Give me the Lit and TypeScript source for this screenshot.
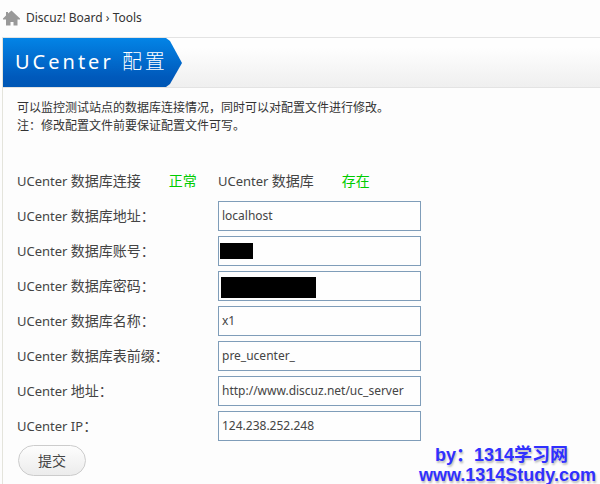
import { LitElement, html, css, nothing } from "lit";
import { customElement } from "lit/decorators.js";

interface Field {
  id: string;
  label: string;
  value: string;
  mask?: "short" | "long";
}

const FIELDS: Field[] = [
  { id: "host", label: "UCenter 数据库地址：", value: "localhost" },
  { id: "user", label: "UCenter 数据库账号：", value: "", mask: "short" },
  { id: "password", label: "UCenter 数据库密码：", value: "", mask: "long" },
  { id: "name", label: "UCenter 数据库名称：", value: "x1" },
  { id: "prefix", label: "UCenter 数据库表前缀：", value: "pre_ucenter_" },
  { id: "url", label: "UCenter 地址：", value: "http://www.discuz.net/uc_server" },
  { id: "ip", label: "UCenter IP：", value: "124.238.252.248" },
];

@customElement("app-root")
export class AppRoot extends LitElement {
  static styles = css`
    :host {
      display: flex;
      flex-direction: column;
      box-sizing: border-box;
      position: relative;
      min-height: 100vh;
      background: #fdfdfd;
      color: #444;
      font: 13px/20px "Noto Sans", "Noto Sans CJK SC", sans-serif;
    }
    .crumbs {
      display: flex;
      align-items: center;
      gap: 6px;
      height: 37px;
      padding: 0 0 2px 3px;
      box-sizing: border-box;
      font-size: 12px;
      color: #333;
    }
    .home {
      width: 17px;
      height: 16px;
    }
    .crumbs a {
      color: inherit;
      text-decoration: none;
    }
    .panel {
      flex: 1;
      margin-left: 2px;
      border-left: 1px solid #e4e4dc;
      border-top: 1px solid #e3e3e3;
    }
    .bar {
      display: flex;
      height: 49px;
      background: linear-gradient(#fefefe 20%, #efefef);
      border-bottom: 1px solid #e3e3e3;
    }
    .title {
      margin: 0;
      padding: 0 14px 0 12px;
      background: linear-gradient(#0384e6, #0059bb 80%, #0057b5);
      clip-path: polygon(0 0, 163px 0, 167px 3px, 179px 25px, 167px 46px, 163px 100%, 0 100%);
      color: #fff;
      font: 20px/48px "Noto Sans", "Noto Sans CJK SC", sans-serif;
      letter-spacing: 3px;
      white-space: nowrap;
    }
    .title .cn {
      font-size: 20px;
      font-weight: 300;
    }
    .body {
      padding: 11px 14px;
    }
    .intro {
      margin: 0 0 28px;
      font-size: 12px;
      line-height: 18px;
      color: #333;
    }
    .row {
      display: grid;
      grid-template-columns: 201px 1fr;
      align-items: center;
      min-height: 35px;
    }
    .cn {
      font-size: 14px;
    }
    .pair {
      display: flex;
      gap: 28px;
    }
    .ok {
      color: #0c0;
    }
    .box {
      position: relative;
      width: 203px;
      max-width: 100%;
      height: 30px;
    }
    input {
      box-sizing: border-box;
      width: 100%;
      height: 100%;
      margin: 0;
      padding: 0 3px;
      border: 1px solid #7f9db9;
      background: #fefefe;
      color: #444;
      font: inherit;
      font-size: 12px;
      display: block;
    }
    .mask {
      position: absolute;
      background: #000;
    }
    .short {
      left: 2px;
      top: 7px;
      width: 33px;
      height: 16px;
    }
    .long {
      left: 3px;
      top: 6px;
      width: 95px;
      height: 21px;
    }
    button {
      display: block;
      margin: 2px 0 0 1px;
      width: 68px;
      height: 31px;
      padding: 0;
      border: 1px solid #ccc;
      border-radius: 16px;
      background: linear-gradient(#fdfdfd, #ececec);
      color: #444;
      font: inherit;
      font-size: 14px;
    }
    .mark {
      position: absolute;
      right: 4px;
      bottom: 0;
      display: flex;
      flex-direction: column;
      color: #3030ff;
      font: bold 18px/20px "Liberation Sans", "Noto Sans CJK SC", sans-serif;
      text-shadow: 1px 2px 2px #bbb;
      padding-bottom: 2px;
    }
    .by {
      padding-left: 16px;
    }
  `;

  private label(text: string) {
    return text
      .split(/([\u4e00-\u9fff：]+)/)
      .map((part) => (/[\u4e00-\u9fff：]/.test(part) ? html`<span class="cn">${part}</span>` : part));
  }

  render() {
    return html`
      <nav class="crumbs">
        <svg class="home" viewBox="0 0 17 16" aria-hidden="true">
          <path
            fill="#999"
            d="M8.5 0.5 L17 8.5 V9.5 H14.5 V15.5 H10.5 V12 H7.5 V15.5 H3 V9.5 H0 V8.5 L3 5.5 V2 H5 V3.6 Z"
          />
        </svg>
        <span><a href="#board">Discuz! Board</a> › <a href="#tools">Tools</a></span>
      </nav>
      <main class="panel">
        <header class="bar">
          <h1 class="title">UCenter <span class="cn">配置</span></h1>
        </header>
        <form class="body" @submit=${(e: Event) => e.preventDefault()}>
          <p class="intro">
            可以监控测试站点的数据库连接情况，同时可以对配置文件进行修改。<br />
            注：修改配置文件前要保证配置文件可写。
          </p>
          <div class="row">
            <div class="pair">
              <span>${this.label("UCenter 数据库连接")}</span>
              <span class="ok cn">正常</span>
            </div>
            <div class="pair">
              <span>${this.label("UCenter 数据库")}</span>
              <span class="ok cn">存在</span>
            </div>
          </div>
          ${FIELDS.map(
            (f) => html`
              <div class="row">
                <label for=${f.id}>${this.label(f.label)}</label>
                <div class="box">
                  <input id=${f.id} type="text" .value=${f.value} />
                  ${f.mask ? html`<span class="mask ${f.mask}"></span>` : nothing}
                </div>
              </div>
            `
          )}
          <button type="submit">提交</button>
        </form>
      </main>
      <div class="mark">
        <span class="by">by：1314学习网</span>
        <span>www.1314Study.com</span>
      </div>
    `;
  }
}
